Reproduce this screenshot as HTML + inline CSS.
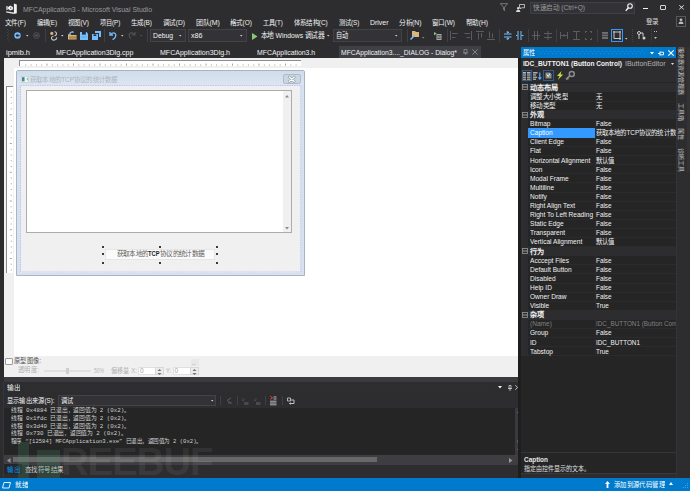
<!DOCTYPE html>
<html lang="zh-CN"><head><meta charset="utf-8"><style>
html,body{margin:0;padding:0;}
body{width:690px;height:491px;overflow:hidden;position:relative;background:#2d2d30;font-family:'Liberation Sans', sans-serif;}
div{position:absolute;box-sizing:border-box;}
svg{position:absolute;overflow:visible;}
.t{transform-origin:0 50%;}
</style></head><body>
<svg style="left:6px;top:3px" width="12" height="12" viewBox="0 0 12 12"><path d="M7.9 0.4 L10.8 1.4 V10.3 L7.9 11.1 Z" fill="#f1f1f1"/><path d="M0.2 8.2 L7.9 9.6 V11.1 L0.2 9.4 Z" fill="#e6e6e6"/><path d="M0.4 2.7 L2.3 4.1 L4.1 2.6 L6.9 3.9 V6.6 L4.1 7.6 L2.3 6.1 L0.4 7.3 Z M4.3 4.3 V5.9 L5.6 5.1 Z M1.4 4.3 V5.7 L2.3 5.0 Z" fill="#f1f1f1" fill-rule="evenodd"/></svg>
<div id="t0" class="t" style="transform:scaleX(0.9219);left:23.2px;top:4.53px;font-size:7.5px;line-height:9.75px;color:#999999;font-weight:normal;font-family:'Liberation Sans', sans-serif;white-space:nowrap;">MFCApplication3 - Microsoft Visual Studio</div>
<svg style="left:500px;top:3px" width="8" height="8" viewBox="0 0 8 8"><path d="M0.4 0.6 H7.6 L4.5 4.2 V7.6 L3.5 6.6 V4.2 Z" fill="none" stroke="#a8a8a8" stroke-width="0.6"/></svg>
<svg style="left:516px;top:4px" width="9" height="8" viewBox="0 0 9 8"><path d="M3.5 0.5 H8.5 V3.8 H5.5 L4.5 4.8 V3.8 H3.5 Z" fill="none" stroke="#d8d8d8" stroke-width="0.8"/><circle cx="2.2" cy="4.3" r="1.2" fill="#d8d8d8"/><path d="M0 8 Q0 5.8 2.2 5.8 Q4.4 5.8 4.4 8 Z" fill="#d8d8d8"/></svg>
<div style="left:530px;top:2px;width:105px;height:12px;background:#333337;border:1px solid #3f3f46;"></div>
<div id="t1" class="t" style="transform:scaleX(0.9449);left:533px;top:2.75px;font-size:7px;line-height:9.10px;color:#999999;font-weight:normal;font-family:'Liberation Sans', sans-serif;white-space:nowrap;">快速启动 (Ctrl+Q)</div>
<svg style="left:625px;top:3px" width="8" height="9" viewBox="0 0 8 9"><circle cx="5" cy="3" r="2.3" fill="none" stroke="#f1f1f1" stroke-width="1.1"/><path d="M3.4 4.7 L0.8 7.8" stroke="#f1f1f1" stroke-width="1.4"/></svg>
<div style="left:642.5px;top:7.6px;width:5px;height:1.6px;background:#f1f1f1;"></div>
<div style="left:660px;top:4.6px;width:5.8px;height:5.5px;border:1px solid #d8d8d8;border-top-width:1.8px;border-radius:1px;"></div>
<svg style="left:678.5px;top:5.2px" width="5" height="4.6" viewBox="0 0 5 4.6"><path d="M0.3 0.3 L4.7 4.3 M4.7 0.3 L0.3 4.3" stroke="#e0e0e0" stroke-width="1"/></svg>
<div id="t2" class="t" style="transform:scaleX(0.9002);left:5px;top:17.75px;font-size:7.3px;line-height:9.49px;color:#f1f1f1;font-weight:normal;font-family:'Liberation Sans', sans-serif;white-space:nowrap;">文件(F)</div>
<div id="t3" class="t" style="transform:scaleX(0.8427);left:37px;top:17.75px;font-size:7.3px;line-height:9.49px;color:#f1f1f1;font-weight:normal;font-family:'Liberation Sans', sans-serif;white-space:nowrap;">编辑(E)</div>
<div id="t4" class="t" style="transform:scaleX(0.8848);left:68px;top:17.75px;font-size:7.3px;line-height:9.49px;color:#f1f1f1;font-weight:normal;font-family:'Liberation Sans', sans-serif;white-space:nowrap;">视图(V)</div>
<div id="t5" class="t" style="transform:scaleX(0.8553);left:99.7px;top:17.75px;font-size:7.3px;line-height:9.49px;color:#f1f1f1;font-weight:normal;font-family:'Liberation Sans', sans-serif;white-space:nowrap;">项目(P)</div>
<div id="t6" class="t" style="transform:scaleX(0.8848);left:131px;top:17.75px;font-size:7.3px;line-height:9.49px;color:#f1f1f1;font-weight:normal;font-family:'Liberation Sans', sans-serif;white-space:nowrap;">生成(B)</div>
<div id="t7" class="t" style="transform:scaleX(0.9113);left:163px;top:17.75px;font-size:7.3px;line-height:9.49px;color:#f1f1f1;font-weight:normal;font-family:'Liberation Sans', sans-serif;white-space:nowrap;">调试(D)</div>
<div id="t8" class="t" style="transform:scaleX(0.9578);left:195.6px;top:17.75px;font-size:7.3px;line-height:9.49px;color:#f1f1f1;font-weight:normal;font-family:'Liberation Sans', sans-serif;white-space:nowrap;">团队(M)</div>
<div id="t9" class="t" style="transform:scaleX(0.8962);left:229.5px;top:17.75px;font-size:7.3px;line-height:9.49px;color:#f1f1f1;font-weight:normal;font-family:'Liberation Sans', sans-serif;white-space:nowrap;">格式(O)</div>
<div id="t10" class="t" style="transform:scaleX(0.8445);left:262.8px;top:17.75px;font-size:7.3px;line-height:9.49px;color:#f1f1f1;font-weight:normal;font-family:'Liberation Sans', sans-serif;white-space:nowrap;">工具(T)</div>
<div id="t11" class="t" style="transform:scaleX(0.8836);left:294px;top:17.75px;font-size:7.3px;line-height:9.49px;color:#f1f1f1;font-weight:normal;font-family:'Liberation Sans', sans-serif;white-space:nowrap;">体系结构(C)</div>
<div id="t12" class="t" style="transform:scaleX(0.8595);left:338.6px;top:17.75px;font-size:7.3px;line-height:9.49px;color:#f1f1f1;font-weight:normal;font-family:'Liberation Sans', sans-serif;white-space:nowrap;">测试(S)</div>
<div id="t13" class="t" style="transform:scaleX(0.9502);left:369.5px;top:17.75px;font-size:7.3px;line-height:9.49px;color:#f1f1f1;font-weight:normal;font-family:'Liberation Sans', sans-serif;white-space:nowrap;">Driver</div>
<div id="t14" class="t" style="transform:scaleX(0.9320);left:398.5px;top:17.75px;font-size:7.3px;line-height:9.49px;color:#f1f1f1;font-weight:normal;font-family:'Liberation Sans', sans-serif;white-space:nowrap;">分析(N)</div>
<div id="t15" class="t" style="transform:scaleX(0.8932);left:432px;top:17.75px;font-size:7.3px;line-height:9.49px;color:#f1f1f1;font-weight:normal;font-family:'Liberation Sans', sans-serif;white-space:nowrap;">窗口(W)</div>
<div id="t16" class="t" style="transform:scaleX(0.9113);left:466px;top:17.75px;font-size:7.3px;line-height:9.49px;color:#f1f1f1;font-weight:normal;font-family:'Liberation Sans', sans-serif;white-space:nowrap;">帮助(H)</div>
<div id="t17" class="t" style="transform:scaleX(0.9000);left:645.9px;top:16.75px;font-size:7.3px;line-height:9.49px;color:#d8d8d8;font-weight:normal;font-family:'Liberation Sans', sans-serif;white-space:nowrap;">登录</div>
<div style="left:675.8px;top:15.7px;width:10.6px;height:10.9px;border:1px solid #5a5a5e;"></div>
<svg style="left:678px;top:18px" width="6" height="6" viewBox="0 0 6 6"><circle cx="3" cy="1.8" r="1.4" fill="#bbb"/><path d="M0.5 6 Q0.5 3.6 3 3.6 Q5.5 3.6 5.5 6 Z" fill="#bbb"/></svg>
<svg style="left:7px;top:29px" width="3" height="12"><g fill="#46464a"><rect x="0" y="0.0" width="1" height="1"/><rect x="1" y="1.5" width="1" height="1"/><rect x="0" y="3.0" width="1" height="1"/><rect x="1" y="4.5" width="1" height="1"/><rect x="0" y="6.0" width="1" height="1"/><rect x="1" y="7.5" width="1" height="1"/><rect x="0" y="9.0" width="1" height="1"/><rect x="1" y="10.5" width="1" height="1"/></g></svg>
<svg style="left:14px;top:32px" width="7" height="7" viewBox="0 0 7 7"><circle cx="3.5" cy="3.5" r="3.2" fill="#75beff"/><path d="M1.5 3.5 L3.5 1.6 V2.8 H5.5 V4.2 H3.5 V5.4 Z" fill="#2d2d30"/></svg>
<svg style="left:25.75px;top:34.7px" width="2.5" height="1.6"><path d="M0 0 H2.5 L1.25 1.6 Z" fill="#d0d0d0"/></svg>
<svg style="left:33px;top:32px" width="7" height="7" viewBox="0 0 7 7"><circle cx="3.5" cy="3.5" r="2.9" fill="none" stroke="#555558" stroke-width="0.9"/><path d="M5.5 3.5 L3.5 1.6 V2.8 H1.5 V4.2 H3.5 V5.4 Z" fill="#555558"/></svg>
<div style="left:45px;top:29px;width:1px;height:13px;background:#3f3f46;"></div>
<svg style="left:49.5px;top:31px" width="8" height="10" viewBox="0 0 8 10"><circle cx="1.8" cy="2.4" r="1.6" fill="#e0b070"/><path d="M4.5 0.8 Q6.8 1 6.5 3.2 Q6.2 4.6 4.5 4.8 M3.5 5.2 Q1 5.6 1.6 7.8 Q2.4 9.4 4.6 9 Q6.8 8.6 6.6 6.4" fill="none" stroke="#c8c8c8" stroke-width="1.1"/></svg>
<svg style="left:61.35px;top:34.7px" width="2.5" height="1.6"><path d="M0 0 H2.5 L1.25 1.6 Z" fill="#d0d0d0"/></svg>
<svg style="left:67.8px;top:31px" width="9" height="9" viewBox="0 0 9 9"><path d="M0 3.2 H2.6 L3.4 4 H8.5 V8.6 H0 Z" fill="#dcb67a"/><path d="M1 5.2 H8 V7.8 H1 Z" fill="#b08a4a"/><path d="M1.6 3.6 Q2 0.8 5 0.9" fill="none" stroke="#75beff" stroke-width="1.1"/><path d="M4.4 0 L6.2 1 L4.6 2.2 Z" fill="#75beff"/></svg>
<svg style="left:80px;top:31.5px" width="8" height="8" viewBox="0 0 8 8"><path d="M0 0 H6.5 L8 1.5 V8 H0 Z" fill="#75beff"/><rect x="2" y="0" width="3.8" height="2.6" fill="#2d2d30"/><rect x="1.5" y="4.6" width="5" height="0.8" fill="#5a9ed8"/></svg>
<svg style="left:91.8px;top:31px" width="9" height="9" viewBox="0 0 9 9"><path d="M3 0 H9 V6 H7 V2 H3 Z" fill="#75beff"/><path d="M0 3 H6 V9 H0 Z" fill="#75beff"/><rect x="1.5" y="3.4" width="2.8" height="1.6" fill="#2d2d30"/></svg>
<div style="left:104px;top:29px;width:1px;height:13px;background:#3f3f46;"></div>
<svg style="left:108.7px;top:31px" width="8" height="9" viewBox="0 0 8 9"><path d="M1 1 V4 H4" fill="none" stroke="#75beff" stroke-width="1.3"/><path d="M1.5 3.6 Q4 0.8 6.2 2.6 Q7.8 4.6 5.2 7.6 L3.6 8.6" fill="none" stroke="#75beff" stroke-width="1.3"/></svg>
<svg style="left:120.75px;top:34.7px" width="2.5" height="1.6"><path d="M0 0 H2.5 L1.25 1.6 Z" fill="#d0d0d0"/></svg>
<svg style="left:128px;top:31px" width="8" height="9" viewBox="0 0 8 9"><path d="M7 1 V4 H4" fill="none" stroke="#555558" stroke-width="1.1"/><path d="M6.5 3.6 Q4 0.8 1.8 2.6 Q0.2 4.6 2.8 7.6" fill="none" stroke="#555558" stroke-width="1.1"/></svg>
<svg style="left:139.75px;top:34.7px" width="2.5" height="1.6"><path d="M0 0 H2.5 L1.25 1.6 Z" fill="#555558"/></svg>
<div style="left:147px;top:29px;width:1px;height:13px;background:#3f3f46;"></div>
<div style="left:150px;top:29px;width:35.5px;height:13px;background:#333337;border:1px solid #434346;"></div>
<div id="t18" class="t" style="transform:scaleX(0.9046);left:153px;top:30.62px;font-size:7.5px;line-height:9.75px;color:#f1f1f1;font-weight:normal;font-family:'Liberation Sans', sans-serif;white-space:nowrap;">Debug</div>
<svg style="left:178.75px;top:34.7px" width="2.5" height="1.6"><path d="M0 0 H2.5 L1.25 1.6 Z" fill="#d0d0d0"/></svg>
<div style="left:188px;top:29px;width:58.5px;height:13px;background:#333337;border:1px solid #434346;"></div>
<div id="t19" class="t" style="transform:scaleX(0.9509);left:190.5px;top:30.62px;font-size:7.5px;line-height:9.75px;color:#f1f1f1;font-weight:normal;font-family:'Liberation Sans', sans-serif;white-space:nowrap;">x86</div>
<svg style="left:239.75px;top:34.7px" width="2.5" height="1.6"><path d="M0 0 H2.5 L1.25 1.6 Z" fill="#d0d0d0"/></svg>
<svg style="left:251.5px;top:32.5px" width="6" height="7" viewBox="0 0 6 7"><path d="M0 0 L5.5 3.5 L0 7 Z" fill="#8ac674"/></svg>
<div id="t20" class="t" style="transform:scaleX(0.9053);left:261px;top:30.62px;font-size:7.5px;line-height:9.75px;color:#f1f1f1;font-weight:normal;font-family:'Liberation Sans', sans-serif;white-space:nowrap;">本地 Windows 调试器</div>
<svg style="left:327.45px;top:34.7px" width="2.5" height="1.6"><path d="M0 0 H2.5 L1.25 1.6 Z" fill="#d0d0d0"/></svg>
<div style="left:333px;top:29px;width:69px;height:13px;background:#333337;border:1px solid #434346;"></div>
<div id="t21" class="t" style="transform:scaleX(0.8214);left:336px;top:30.62px;font-size:7.5px;line-height:9.75px;color:#f1f1f1;font-weight:normal;font-family:'Liberation Sans', sans-serif;white-space:nowrap;">自动</div>
<svg style="left:395.25px;top:34.7px" width="2.5" height="1.6"><path d="M0 0 H2.5 L1.25 1.6 Z" fill="#d0d0d0"/></svg>
<div style="left:406.5px;top:29px;width:1px;height:13px;background:#3f3f46;"></div>
<svg style="left:410px;top:31px" width="9" height="9" viewBox="0 0 9 9"><path d="M2 0 H5 L6 1 H9 V6 H2 Z" fill="#dcb67a"/><path d="M0.5 8.5 L4.5 4.5" stroke="#75beff" stroke-width="1.6"/></svg>
<svg style="left:421.95px;top:37.400000000000006px" width="2.5" height="1.6"><path d="M0 0 H2.5 L1.25 1.6 Z" fill="#8a8a8a"/></svg>
<svg style="left:434px;top:31.5px" width="8" height="9" viewBox="0 0 8 9"><path d="M0 0 L2.8 1.6 L0 3.2 Z" fill="#8ac674"/><rect x="2.5" y="2" width="5" height="6" fill="#a8a8a8"/><path d="M3.3 3.5 H6.7 M3.3 5 H6.7 M3.3 6.5 H6.7" stroke="#2d2d30" stroke-width="0.6"/></svg>
<div style="left:446.6px;top:29px;width:1px;height:13px;background:#3f3f46;"></div>
<svg style="left:450.4px;top:31px" width="8" height="9" viewBox="0 0 8 9"><path d="M0.5 0 V9 M2 2.5 H7.5 M2 6.5 H5.5" fill="none" stroke="#5c5c60" stroke-width="1"/></svg>
<svg style="left:463.5px;top:31px" width="8" height="9" viewBox="0 0 8 9"><path d="M7.5 0 V9 M0.5 2.5 H6 M2.5 6.5 H6" fill="none" stroke="#5c5c60" stroke-width="1"/></svg>
<svg style="left:475.6px;top:31px" width="8" height="9" viewBox="0 0 8 9"><path d="M0 0.5 H8 M2.5 2 V8.5 M5.5 2 V6.5" fill="none" stroke="#5c5c60" stroke-width="1"/></svg>
<svg style="left:487px;top:31px" width="8" height="9" viewBox="0 0 8 9"><path d="M0 8.5 H8 M2.5 0.5 V7 M5.5 2.5 V7" fill="none" stroke="#5c5c60" stroke-width="1"/></svg>
<div style="left:499px;top:29px;width:1px;height:13px;background:#3f3f46;"></div>
<svg style="left:503.5px;top:31px" width="8" height="9" viewBox="0 0 8 9"><path d="M0 3 H7.5 M0 6 H7.5 M3.8 0 V2 M3.8 7 V9 M2.5 1 L3.8 2.2 L5 1 M2.5 8 L3.8 6.8 L5 8" fill="none" stroke="#75beff" stroke-width="1"/></svg>
<svg style="left:516px;top:31px" width="8" height="9" viewBox="0 0 8 9"><path d="M2 0 V9 M5 0 V9 M0 4.5 H1.5 M5.5 4.5 H7.5" fill="none" stroke="#75beff" stroke-width="1"/></svg>
<div style="left:528px;top:29px;width:1px;height:13px;background:#3f3f46;"></div>
<svg style="left:532px;top:31px" width="8" height="9" viewBox="0 0 8 9"><path d="M2.5 0 V9 M5.5 0 V9 M0 4.5 H8" fill="none" stroke="#5c5c60" stroke-width="1"/></svg>
<svg style="left:544px;top:31px" width="8" height="9" viewBox="0 0 8 9"><path d="M0 2.5 H8 M0 6.5 H8 M4 0 V9" fill="none" stroke="#5c5c60" stroke-width="1"/></svg>
<div style="left:555.6px;top:29px;width:1px;height:13px;background:#3f3f46;"></div>
<svg style="left:559.5px;top:31px" width="8" height="9" viewBox="0 0 8 9"><path d="M0.5 1 V8 M7.5 1 V8 M1 4.5 H7 M4 3 V6" fill="none" stroke="#5c5c60" stroke-width="1"/></svg>
<svg style="left:573px;top:31px" width="7" height="9" viewBox="0 0 7 9"><path d="M0 0.5 H7 M0 8.5 H7 M3.5 0.5 V8.5" fill="none" stroke="#5c5c60" stroke-width="1"/></svg>
<svg style="left:585px;top:31px" width="7" height="9" viewBox="0 0 7 9"><path d="M0 0.5 H2 M5 0.5 H7 M0 8.5 H2 M5 8.5 H7 M0.5 0 V2 M0.5 7 V9 M6.5 0 V2 M6.5 7 V9" fill="none" stroke="#5c5c60" stroke-width="1"/></svg>
<div style="left:597px;top:29px;width:1px;height:13px;background:#3f3f46;"></div>
<svg style="left:601.5px;top:32px" width="6" height="7" viewBox="0 0 6 7"><rect x="0" y="0" width="6" height="7" fill="#707074"/><path d="M0 2.3 H6 M0 4.6 H6" stroke="#2d2d30" stroke-width="0.7"/></svg>
<div style="left:610.5px;top:28.5px;width:12px;height:13.5px;border:1px solid #3399ff;"></div>
<svg style="left:612.5px;top:31px" width="8" height="9" viewBox="0 0 8 9"><path d="M1 0 V7.5 H8" fill="none" stroke="#c8c8c8" stroke-width="1"/></svg>
<svg style="left:612.5px;top:31px" width="8" height="9"><path d="M0 1 H8 M7 0 V9" fill="none" stroke="#c8c8c8" stroke-width="1"/></svg>
<svg style="left:624.75px;top:38.2px" width="2.5" height="1.6"><path d="M0 0 H2.5 L1.25 1.6 Z" fill="#d0d0d0"/></svg>
<svg style="left:631.5px;top:29px" width="1" height="13"><g fill="#46464a"><rect x="0" y="0" width="1" height="1"/><rect x="0" y="2" width="1" height="1"/><rect x="0" y="4" width="1" height="1"/><rect x="0" y="6" width="1" height="1"/><rect x="0" y="8" width="1" height="1"/><rect x="0" y="10" width="1" height="1"/><rect x="0" y="12" width="1" height="1"/></g></svg>
<svg style="left:637px;top:31px" width="9" height="9" viewBox="0 0 9 9"><circle cx="2" cy="2" r="1.5" fill="none" stroke="#d0d0d0" stroke-width="1"/><circle cx="7" cy="7" r="1.5" fill="#d0d0d0"/><path d="M3.5 2 H6 V5.5 M2 3.5 V8" fill="none" stroke="#d0d0d0" stroke-width="1"/></svg>
<svg style="left:650.5px;top:29px" width="1" height="13"><g fill="#46464a"><rect x="0" y="0" width="1" height="1"/><rect x="0" y="2" width="1" height="1"/><rect x="0" y="4" width="1" height="1"/><rect x="0" y="6" width="1" height="1"/><rect x="0" y="8" width="1" height="1"/><rect x="0" y="10" width="1" height="1"/><rect x="0" y="12" width="1" height="1"/></g></svg>
<svg style="left:654px;top:31px" width="3" height="10"><rect x="0" y="0" width="1" height="1" fill="#bbb"/><rect x="2" y="0" width="1" height="1" fill="#bbb"/><path d="M0 6 H3 L1.5 8 Z" fill="#bbb"/></svg>
<div id="t22" class="t" style="transform:scaleX(0.9922);left:5.5px;top:47.83px;font-size:7.5px;line-height:9.75px;color:#f1f1f1;font-weight:normal;font-family:'Liberation Sans', sans-serif;white-space:nowrap;">ipmib.h</div>
<div id="t23" class="t" style="transform:scaleX(0.9376);left:56px;top:47.83px;font-size:7.5px;line-height:9.75px;color:#f1f1f1;font-weight:normal;font-family:'Liberation Sans', sans-serif;white-space:nowrap;">MFCApplication3Dlg.cpp</div>
<div id="t24" class="t" style="transform:scaleX(0.9380);left:159.6px;top:47.83px;font-size:7.5px;line-height:9.75px;color:#f1f1f1;font-weight:normal;font-family:'Liberation Sans', sans-serif;white-space:nowrap;">MFCApplication3Dlg.h</div>
<div id="t25" class="t" style="transform:scaleX(0.9183);left:256.7px;top:47.83px;font-size:7.5px;line-height:9.75px;color:#f1f1f1;font-weight:normal;font-family:'Liberation Sans', sans-serif;white-space:nowrap;">MFCApplication3.h</div>
<div style="left:339px;top:46px;width:142px;height:12px;background:#3f3f46;"></div>
<div id="t26" class="t" style="transform:scaleX(0.9005);left:341px;top:47.83px;font-size:7.5px;line-height:9.75px;color:#f1f1f1;font-weight:normal;font-family:'Liberation Sans', sans-serif;white-space:nowrap;">MFCApplication3...._DIALOG - Dialog*</div>
<svg style="left:463px;top:49px" width="5" height="6"><path d="M1 0.5 H4 V4 H1 Z M0 4 H5 M2.5 4 V6" fill="none" stroke="#8a8a8e" stroke-width="0.8"/></svg>
<svg style="left:471.5px;top:49px" width="6" height="6"><path d="M0.3 0.3 L5.7 5.7 M5.7 0.3 L0.3 5.7" stroke="#8a8a8e" stroke-width="0.9"/></svg>
<div style="left:4px;top:58px;width:514.4px;height:319px;background:#ffffff;"></div>
<div style="left:4px;top:58px;width:514.4px;height:9.6px;background:#f0f0f0;"></div>
<div style="left:4px;top:58px;width:9.8px;height:298px;background:#f0f0f0;"></div>
<div style="left:19px;top:60px;width:282px;height:6px;background:#ffffff;border-top:1px solid #8c8c8c;border-left:1px solid #8c8c8c;"></div>
<svg style="left:19.5px;top:61px" width="282" height="6"><rect x="5.30" y="3.5" width="1" height="1.1" fill="#a4a4a4"/><rect x="10.60" y="3.5" width="1" height="1.1" fill="#a4a4a4"/><rect x="15.90" y="3.5" width="1" height="1.1" fill="#a4a4a4"/><rect x="21.20" y="3.5" width="1" height="1.1" fill="#a4a4a4"/><rect x="26.50" y="2.6" width="1" height="2" fill="#a4a4a4"/><rect x="31.80" y="3.5" width="1" height="1.1" fill="#a4a4a4"/><rect x="37.10" y="3.5" width="1" height="1.1" fill="#a4a4a4"/><rect x="42.40" y="3.5" width="1" height="1.1" fill="#a4a4a4"/><rect x="47.70" y="3.5" width="1" height="1.1" fill="#a4a4a4"/><rect x="53.00" y="2.6" width="1" height="2" fill="#a4a4a4"/><rect x="58.30" y="3.5" width="1" height="1.1" fill="#a4a4a4"/><rect x="63.60" y="3.5" width="1" height="1.1" fill="#a4a4a4"/><rect x="68.90" y="3.5" width="1" height="1.1" fill="#a4a4a4"/><rect x="74.20" y="3.5" width="1" height="1.1" fill="#a4a4a4"/><rect x="79.50" y="2.6" width="1" height="2" fill="#a4a4a4"/><rect x="84.80" y="3.5" width="1" height="1.1" fill="#a4a4a4"/><rect x="90.10" y="3.5" width="1" height="1.1" fill="#a4a4a4"/><rect x="95.40" y="3.5" width="1" height="1.1" fill="#a4a4a4"/><rect x="100.70" y="3.5" width="1" height="1.1" fill="#a4a4a4"/><rect x="106.00" y="2.6" width="1" height="2" fill="#a4a4a4"/><rect x="111.30" y="3.5" width="1" height="1.1" fill="#a4a4a4"/><rect x="116.60" y="3.5" width="1" height="1.1" fill="#a4a4a4"/><rect x="121.90" y="3.5" width="1" height="1.1" fill="#a4a4a4"/><rect x="127.20" y="3.5" width="1" height="1.1" fill="#a4a4a4"/><rect x="132.50" y="2.6" width="1" height="2" fill="#a4a4a4"/><rect x="137.80" y="3.5" width="1" height="1.1" fill="#a4a4a4"/><rect x="143.10" y="3.5" width="1" height="1.1" fill="#a4a4a4"/><rect x="148.40" y="3.5" width="1" height="1.1" fill="#a4a4a4"/><rect x="153.70" y="3.5" width="1" height="1.1" fill="#a4a4a4"/><rect x="159.00" y="2.6" width="1" height="2" fill="#a4a4a4"/><rect x="164.30" y="3.5" width="1" height="1.1" fill="#a4a4a4"/><rect x="169.60" y="3.5" width="1" height="1.1" fill="#a4a4a4"/><rect x="174.90" y="3.5" width="1" height="1.1" fill="#a4a4a4"/><rect x="180.20" y="3.5" width="1" height="1.1" fill="#a4a4a4"/><rect x="185.50" y="2.6" width="1" height="2" fill="#a4a4a4"/><rect x="190.80" y="3.5" width="1" height="1.1" fill="#a4a4a4"/><rect x="196.10" y="3.5" width="1" height="1.1" fill="#a4a4a4"/><rect x="201.40" y="3.5" width="1" height="1.1" fill="#a4a4a4"/><rect x="206.70" y="3.5" width="1" height="1.1" fill="#a4a4a4"/><rect x="212.00" y="2.6" width="1" height="2" fill="#a4a4a4"/><rect x="217.30" y="3.5" width="1" height="1.1" fill="#a4a4a4"/><rect x="222.60" y="3.5" width="1" height="1.1" fill="#a4a4a4"/><rect x="227.90" y="3.5" width="1" height="1.1" fill="#a4a4a4"/><rect x="233.20" y="3.5" width="1" height="1.1" fill="#a4a4a4"/><rect x="238.50" y="2.6" width="1" height="2" fill="#a4a4a4"/><rect x="243.80" y="3.5" width="1" height="1.1" fill="#a4a4a4"/><rect x="249.10" y="3.5" width="1" height="1.1" fill="#a4a4a4"/><rect x="254.40" y="3.5" width="1" height="1.1" fill="#a4a4a4"/><rect x="259.70" y="3.5" width="1" height="1.1" fill="#a4a4a4"/><rect x="265.00" y="2.6" width="1" height="2" fill="#a4a4a4"/><rect x="270.30" y="3.5" width="1" height="1.1" fill="#a4a4a4"/><rect x="275.60" y="3.5" width="1" height="1.1" fill="#a4a4a4"/></svg>
<div style="left:6px;top:85.7px;width:6.5px;height:187px;background:#ffffff;border-top:1px solid #8c8c8c;border-left:1px solid #8c8c8c;"></div>
<svg style="left:6.5px;top:85.7px" width="7" height="187"><rect x="3.7" y="5.25" width="1.1" height="1" fill="#a4a4a4"/><rect x="3.7" y="11.00" width="1.1" height="1" fill="#a4a4a4"/><rect x="3.7" y="16.75" width="1.1" height="1" fill="#a4a4a4"/><rect x="3.7" y="22.50" width="1.1" height="1" fill="#a4a4a4"/><rect x="2.8" y="28.25" width="2" height="1" fill="#a4a4a4"/><rect x="3.7" y="34.00" width="1.1" height="1" fill="#a4a4a4"/><rect x="3.7" y="39.75" width="1.1" height="1" fill="#a4a4a4"/><rect x="3.7" y="45.50" width="1.1" height="1" fill="#a4a4a4"/><rect x="3.7" y="51.25" width="1.1" height="1" fill="#a4a4a4"/><rect x="2.8" y="57.00" width="2" height="1" fill="#a4a4a4"/><rect x="3.7" y="62.75" width="1.1" height="1" fill="#a4a4a4"/><rect x="3.7" y="68.50" width="1.1" height="1" fill="#a4a4a4"/><rect x="3.7" y="74.25" width="1.1" height="1" fill="#a4a4a4"/><rect x="3.7" y="80.00" width="1.1" height="1" fill="#a4a4a4"/><rect x="2.8" y="85.75" width="2" height="1" fill="#a4a4a4"/><rect x="3.7" y="91.50" width="1.1" height="1" fill="#a4a4a4"/><rect x="3.7" y="97.25" width="1.1" height="1" fill="#a4a4a4"/><rect x="3.7" y="103.00" width="1.1" height="1" fill="#a4a4a4"/><rect x="3.7" y="108.75" width="1.1" height="1" fill="#a4a4a4"/><rect x="2.8" y="114.50" width="2" height="1" fill="#a4a4a4"/><rect x="3.7" y="120.25" width="1.1" height="1" fill="#a4a4a4"/><rect x="3.7" y="126.00" width="1.1" height="1" fill="#a4a4a4"/><rect x="3.7" y="131.75" width="1.1" height="1" fill="#a4a4a4"/><rect x="3.7" y="137.50" width="1.1" height="1" fill="#a4a4a4"/><rect x="2.8" y="143.25" width="2" height="1" fill="#a4a4a4"/><rect x="3.7" y="149.00" width="1.1" height="1" fill="#a4a4a4"/><rect x="3.7" y="154.75" width="1.1" height="1" fill="#a4a4a4"/><rect x="3.7" y="160.50" width="1.1" height="1" fill="#a4a4a4"/><rect x="3.7" y="166.25" width="1.1" height="1" fill="#a4a4a4"/><rect x="2.8" y="172.00" width="2" height="1" fill="#a4a4a4"/><rect x="3.7" y="177.75" width="1.1" height="1" fill="#a4a4a4"/><rect x="3.7" y="183.50" width="1.1" height="1" fill="#a4a4a4"/></svg>
<div style="left:4px;top:356px;width:514.4px;height:21px;background:#f0f0f0;"></div>
<div style="left:15.6px;top:70px;width:289px;height:206px;background:#d6e2ee;border:1px solid #a8b4c0;border-radius:2px 2px 0 0;"></div>
<div style="left:16.6px;top:71px;width:287px;height:14px;background:linear-gradient(#cfdcea,#dbe6f1);"></div>
<svg style="left:20.5px;top:76px" width="8" height="6.5"><defs><linearGradient id="ig" x1="0" y1="0" x2="0" y2="1"><stop offset="0" stop-color="#3c78b8"/><stop offset="1" stop-color="#3aa060"/></linearGradient></defs><rect x="0.25" y="0.25" width="7.5" height="6" fill="#f6f6f6" stroke="#b8bcc8" stroke-width="0.5"/><rect x="1" y="1.2" width="2.6" height="4.2" fill="url(#ig)"/><rect x="5.8" y="1.8" width="1" height="2.5" fill="#6ab890"/></svg>
<div id="t27" class="t" style="transform:scaleX(0.8915);left:30px;top:74.82px;font-size:7.2px;line-height:9.36px;color:#aeb5bd;font-weight:normal;font-family:'Liberation Sans', sans-serif;white-space:nowrap;">获取本地的TCP协议的统计数据</div>
<div style="left:283px;top:74.4px;width:17.6px;height:10px;background:#c9d6e4;border:1px solid #b0bccb;border-radius:2px;"></div>
<svg style="left:288px;top:76px" width="7.5" height="6.5"><path d="M1.2 1 L6.3 5.5 M6.3 1 L1.2 5.5" stroke="#8d99a6" stroke-width="2.6" stroke-linecap="round"/><path d="M1.2 1 L6.3 5.5 M6.3 1 L1.2 5.5" stroke="#ffffff" stroke-width="1.3" stroke-linecap="round"/></svg>
<div style="left:19.5px;top:85.3px;width:281.3px;height:187.5px;background:#f0f0f0;"></div>
<svg style="left:19.5px;top:85.3px" width="282" height="188"><rect x="0.5" y="0.5" width="280.3" height="186.5" fill="none" stroke="#c0c0f8" stroke-width="1" stroke-dasharray="1.6 0.8"/></svg>
<div style="left:26px;top:90px;width:266px;height:143px;background:#ffffff;border:1px solid #acacac;"></div>
<div style="left:282.5px;top:91px;width:8.5px;height:141px;background:#f0f0f0;"></div>
<svg style="left:284.5px;top:94.5px" width="4" height="3"><path d="M0 2.5 L2 0 L4 2.5 Z" fill="#8a8a8a"/></svg>
<svg style="left:284.5px;top:226.5px" width="4" height="3"><path d="M0 0 L4 0 L2 2.5 Z" fill="#8a8a8a"/></svg>
<div style="left:104.8px;top:248.6px;width:110.7px;height:11.4px;background:#fafafa;border:1px solid #e6e6e6;"></div>
<div style="left:101.9px;top:245.7px;width:2px;height:2px;background:#383838;"></div>
<div style="left:101.9px;top:253.4px;width:2px;height:2px;background:#383838;"></div>
<div style="left:101.9px;top:261.7px;width:2px;height:2px;background:#383838;"></div>
<div style="left:159px;top:245.7px;width:2px;height:2px;background:#383838;"></div>
<div style="left:159px;top:261.7px;width:2px;height:2px;background:#383838;"></div>
<div style="left:216.4px;top:245.7px;width:2px;height:2px;background:#383838;"></div>
<div style="left:216.4px;top:253.4px;width:2px;height:2px;background:#383838;"></div>
<div style="left:216.4px;top:261.7px;width:2px;height:2px;background:#383838;"></div>
<div id="t28" class="t" style="transform:scaleX(1.0333);left:117px;top:250.34px;font-size:6.4px;line-height:8.32px;color:#606060;font-weight:normal;font-family:'Liberation Serif', serif;white-space:nowrap;">获取本地的</div>
<div id="t29" class="t" style="transform:scaleX(0.8987);left:148px;top:250.34px;font-size:6.4px;line-height:8.32px;color:#202020;font-weight:bold;font-family:'Liberation Sans', sans-serif;white-space:nowrap;">TCP</div>
<div id="t30" class="t" style="transform:scaleX(1.0595);left:159.5px;top:250.34px;font-size:6.4px;line-height:8.32px;color:#606060;font-weight:normal;font-family:'Liberation Serif', serif;white-space:nowrap;">协议的统计数据</div>
<div style="left:5.4px;top:358.3px;width:7.2px;height:7.2px;background:#fbfbfb;border:1px solid #9a9a9a;border-radius:1px;"></div>
<div id="t31" class="t" style="transform:scaleX(0.9033);left:14.3px;top:357.28px;font-size:6.8px;line-height:8.84px;color:#505050;font-weight:normal;font-family:'Liberation Sans', sans-serif;white-space:nowrap;">原型图像:</div>
<div id="t32" class="t" style="transform:scaleX(0.9174);left:17.8px;top:366.28px;font-size:6.8px;line-height:8.84px;color:#b0b0b0;font-weight:normal;font-family:'Liberation Sans', sans-serif;white-space:nowrap;">透明度:</div>
<div style="left:43.5px;top:369.8px;width:47.7px;height:2px;background:#e0e0e0;border-radius:1px;"></div>
<div style="left:66.2px;top:367.7px;width:2.7px;height:6.1px;background:#cfcfcf;"></div>
<div id="t33" class="t" style="transform:scaleX(0.7931);left:94px;top:366.90px;font-size:6.3px;line-height:8.19px;color:#b8b8b8;font-weight:normal;font-family:'Liberation Sans', sans-serif;white-space:nowrap;">50%</div>
<div id="t34" class="t" style="transform:scaleX(0.8870);left:111px;top:366.58px;font-size:6.8px;line-height:8.84px;color:#b0b0b0;font-weight:normal;font-family:'Liberation Sans', sans-serif;white-space:nowrap;">偏移量 X:</div>
<div style="left:138.4px;top:367px;width:25.6px;height:8.4px;background:#ffffff;border:1px solid #e0e0e0;"></div>
<div id="t35" class="t" style="left:140px;top:366.97px;font-size:6.5px;line-height:8.45px;color:#a0a0a0;font-weight:normal;font-family:'Liberation Sans', sans-serif;white-space:nowrap;">0</div>
<div style="left:155px;top:367px;width:8.5px;height:8.4px;background:#ececec;border:1px solid #d8d8d8;"></div>
<div id="t36" class="t" style="transform:scaleX(0.8269);left:166px;top:366.58px;font-size:6.8px;line-height:8.84px;color:#b0b0b0;font-weight:normal;font-family:'Liberation Sans', sans-serif;white-space:nowrap;">Y:</div>
<div style="left:173px;top:367px;width:25.7px;height:8.4px;background:#ffffff;border:1px solid #e0e0e0;"></div>
<div id="t37" class="t" style="left:174.6px;top:366.97px;font-size:6.5px;line-height:8.45px;color:#a0a0a0;font-weight:normal;font-family:'Liberation Sans', sans-serif;white-space:nowrap;">0</div>
<div style="left:190px;top:367px;width:8.5px;height:8.4px;background:#ececec;border:1px solid #d8d8d8;"></div>
<svg style="left:157px;top:368.5px" width="5" height="6"><path d="M0.5 2 L2.5 0 L4.5 2 Z M0.5 4 L4.5 4 L2.5 6 Z" fill="#707070"/></svg>
<svg style="left:192px;top:368.5px" width="5" height="6"><path d="M0.5 2 L2.5 0 L4.5 2 Z M0.5 4 L4.5 4 L2.5 6 Z" fill="#707070"/></svg>
<div style="left:191px;top:359px;width:7.7px;height:7px;background:#e8e8e8;"></div>
<div id="t38" class="t" style="left:192px;top:359.60px;font-size:6px;line-height:7.80px;color:#707070;font-weight:normal;font-family:'Liberation Sans', sans-serif;white-space:nowrap;">..</div>
<div style="left:4px;top:377px;width:515px;height:5px;background:#3a3a3f;"></div>
<div style="left:0px;top:382px;width:519px;height:95px;background:#2d2d30;"></div>
<div id="t39" class="t" style="transform:scaleX(0.9286);left:6.5px;top:383.25px;font-size:7.3px;line-height:9.49px;color:#f1f1f1;font-weight:normal;font-family:'Liberation Sans', sans-serif;white-space:nowrap;">输出</div>
<svg style="left:22px;top:386px;opacity:0.4" width="468" height="4"><defs><pattern id="gp" width="4" height="4" patternUnits="userSpaceOnUse"><rect x="0" y="0" width="1" height="1" fill="#38383c"/><rect x="2" y="2" width="1" height="1" fill="#38383c"/></pattern></defs><rect width="468" height="4" fill="url(#gp)"/></svg>
<svg style="left:498px;top:386.2px" width="4" height="3"><path d="M0 0 H4 L2 2.6 Z" fill="#f1f1f1"/></svg>
<svg style="left:507.5px;top:384.5px" width="4" height="6"><path d="M1 0.5 H3 V3.5 H1 Z M0 3.5 H4 M2 3.5 V6" fill="none" stroke="#d0d0d0" stroke-width="0.8"/></svg>
<svg style="left:515px;top:385px" width="3" height="5"><path d="M0.3 0.3 L2.6 2.5 L0.3 4.7" fill="none" stroke="#d0d0d0" stroke-width="0.9"/></svg>
<div id="t40" class="t" style="transform:scaleX(0.8915);left:7px;top:395.95px;font-size:7px;line-height:9.10px;color:#f1f1f1;font-weight:normal;font-family:'Liberation Sans', sans-serif;white-space:nowrap;">显示输出来源(S):</div>
<div style="left:58.2px;top:395.3px;width:157.7px;height:10.7px;background:#333337;border:1px solid #434346;"></div>
<div style="left:3.3px;top:382px;width:0.8px;height:95px;background:#37373b;"></div>
<div id="t41" class="t" style="transform:scaleX(0.8929);left:60.5px;top:396.15px;font-size:7px;line-height:9.10px;color:#f1f1f1;font-weight:normal;font-family:'Liberation Sans', sans-serif;white-space:nowrap;">调试</div>
<svg style="left:210.75px;top:400.2px" width="2.5" height="1.6"><path d="M0 0 H2.5 L1.25 1.6 Z" fill="#d0d0d0"/></svg>
<div style="left:220px;top:396px;width:1px;height:9px;background:#3f3f46;"></div>
<div style="left:237px;top:396px;width:1px;height:9px;background:#3f3f46;"></div>
<div style="left:265px;top:396px;width:1px;height:9px;background:#3f3f46;"></div>
<div style="left:282px;top:396px;width:1px;height:9px;background:#3f3f46;"></div>
<svg style="left:225px;top:397px" width="7" height="8"><path d="M6 1 L2 3.5 L6 6" fill="none" stroke="#5a5a5e" stroke-width="1"/><path d="M3 6 H7" stroke="#5a5a5e" stroke-width="1"/></svg>
<svg style="left:242px;top:397.5px" width="7" height="8"><path d="M0 1 H3 M0 2.5 H2" stroke="#4a4a4e" stroke-width="0.9"/><rect x="2" y="4" width="4.5" height="3" fill="#4a4a4e"/></svg>
<svg style="left:254px;top:397.5px" width="7" height="8"><path d="M0 1 H3 M0 2.5 H2" stroke="#4a4a4e" stroke-width="0.9"/><rect x="2" y="4" width="4.5" height="3" fill="#4a4a4e"/></svg>
<svg style="left:270px;top:396px" width="7" height="9"><path d="M3.5 1 H6.5 M3.5 3 H6.5 M0 5.2 H6.5 M0 7 H6.5 M0 8.8 H6.5" stroke="#d8d8d8" stroke-width="0.8"/><path d="M0.3 0.2 L2.6 1.8 L0.3 3.4" fill="none" stroke="#e8443a" stroke-width="1"/></svg>
<svg style="left:287px;top:396.5px" width="8" height="8"><path d="M0.5 1 H3.5 V4 H0.5 Z" fill="none" stroke="#d0d0d0" stroke-width="0.8"/><path d="M4 3 H7 V6.5 H2.5 M3.5 5.5 L2.5 6.5 L3.5 7.5" fill="none" stroke="#d0d0d0" stroke-width="0.9"/></svg>
<div style="left:4px;top:407.5px;width:511px;height:47.5px;background:#252526;"></div>
<div style="left:515px;top:407.5px;width:4px;height:48px;background:#3a3a3e;"></div>
<div style="left:516.5px;top:411.5px;width:1px;height:1px;background:#6a6a6e;"></div>
<div style="left:516.5px;top:440px;width:1px;height:3px;background:#5a5a5e;"></div>
<div style="left:516.5px;top:449px;width:1px;height:1px;background:#6a6a6e;"></div>
<div id="t42" class="t" style="transform:scaleX(0.9557);left:10.6px;top:407.24px;font-size:6.1px;line-height:7.93px;color:#cfcfcf;font-weight:normal;font-family:'Liberation Mono', monospace;white-space:nowrap;">线程 0x4884 已退出，返回值为 2 (0x2)。</div>
<div id="t43" class="t" style="transform:scaleX(0.9557);left:10.6px;top:414.99px;font-size:6.1px;line-height:7.93px;color:#cfcfcf;font-weight:normal;font-family:'Liberation Mono', monospace;white-space:nowrap;">线程 0x1fdc 已退出，返回值为 2 (0x2)。</div>
<div id="t44" class="t" style="transform:scaleX(0.9557);left:10.6px;top:422.74px;font-size:6.1px;line-height:7.93px;color:#cfcfcf;font-weight:normal;font-family:'Liberation Mono', monospace;white-space:nowrap;">线程 0x3d40 已退出，返回值为 2 (0x2)。</div>
<div id="t45" class="t" style="transform:scaleX(0.9557);left:10.6px;top:430.49px;font-size:6.1px;line-height:7.93px;color:#cfcfcf;font-weight:normal;font-family:'Liberation Mono', monospace;white-space:nowrap;">线程 0x730 已退出，返回值为 2 (0x2)。</div>
<div id="t46" class="t" style="transform:scaleX(0.9155);left:10.6px;top:438.24px;font-size:6.1px;line-height:7.93px;color:#cfcfcf;font-weight:normal;font-family:'Liberation Mono', monospace;white-space:nowrap;">程序 “[12584] MFCApplication3.exe” 已退出，返回值为 2 (0x2)。</div>
<div style="left:4px;top:455px;width:515px;height:9.5px;background:#3e3e42;"></div>
<svg style="left:6.5px;top:457.5px" width="4" height="5"><path d="M3.5 0 L0 2.5 L3.5 5 Z" fill="#999"/></svg>
<div style="left:12.6px;top:456.7px;width:364.5px;height:5px;background:#686868;"></div>
<svg style="left:508.5px;top:457.5px" width="4" height="5"><path d="M0 0 L3.5 2.5 L0 5 Z" fill="#999"/></svg>
<div style="left:4px;top:464.2px;width:17.6px;height:9.8px;background:#252526;"></div>
<div id="t47" class="t" style="transform:scaleX(0.9286);left:6.5px;top:464.95px;font-size:7px;line-height:9.10px;color:#0097fb;font-weight:normal;font-family:'Liberation Sans', sans-serif;white-space:nowrap;">输出</div>
<div id="t48" class="t" style="transform:scaleX(0.9167);left:25px;top:465.15px;font-size:7px;line-height:9.10px;color:#d0d0d0;font-weight:normal;font-family:'Liberation Sans', sans-serif;white-space:nowrap;">查找符号结果</div>
<div style="left:0px;top:478px;width:690px;height:13px;background:#007acc;"></div>
<svg style="left:2px;top:481.5px" width="9" height="7"><path d="M2 0.5 H8.5 L7 6 H0.5 Z" fill="none" stroke="#ffffff" stroke-width="0.9"/></svg>
<div id="t49" class="t" style="transform:scaleX(0.9286);left:14.5px;top:479.95px;font-size:7px;line-height:9.10px;color:#ffffff;font-weight:normal;font-family:'Liberation Sans', sans-serif;white-space:nowrap;">就绪</div>
<svg style="left:604.5px;top:480.5px" width="5" height="7"><path d="M2.5 0 L5 3 H3.4 V7 H1.6 V3 H0 Z" fill="#ffffff"/></svg>
<div id="t50" class="t" style="transform:scaleX(0.9107);left:614px;top:479.65px;font-size:7px;line-height:9.10px;color:#ffffff;font-weight:normal;font-family:'Liberation Sans', sans-serif;white-space:nowrap;">添加到源代码管理</div>
<svg style="left:668.5px;top:482px" width="4" height="3"><path d="M0 3 L2 0 L4 3 Z" fill="#ffffff"/></svg>
<svg style="left:683px;top:483px" width="6" height="6"><g fill="#4c9ad6"><rect x="4" y="0" width="1" height="1"/><rect x="2" y="2" width="1" height="1"/><rect x="4" y="2" width="1" height="1"/><rect x="0" y="4" width="1" height="1"/><rect x="2" y="4" width="1" height="1"/><rect x="4" y="4" width="1" height="1"/></g></svg>
<div style="left:518.4px;top:57.7px;width:2.4px;height:420.3px;background:#1e1e1e;"></div>
<div style="left:520.5px;top:47px;width:155.5px;height:11.3px;background:#007acc;"></div>
<div id="t51" class="t" style="transform:scaleX(0.8571);left:523px;top:47.96px;font-size:7.3px;line-height:9.49px;color:#ffffff;font-weight:normal;font-family:'Liberation Sans', sans-serif;white-space:nowrap;">属性</div>
<svg style="left:538px;top:51px;opacity:0.6" width="107" height="4"><defs><pattern id="bp" width="4" height="4" patternUnits="userSpaceOnUse"><rect x="0" y="0" width="1" height="1" fill="#3c97d8"/><rect x="2" y="2" width="1" height="1" fill="#3c97d8"/></pattern></defs><rect width="107" height="4" fill="url(#bp)"/></svg>
<svg style="left:649.5px;top:51.8px" width="4" height="3"><path d="M0 0 H4 L2 2.6 Z" fill="#ffffff"/></svg>
<svg style="left:657.5px;top:50.5px" width="7" height="5"><path d="M0 2.5 H2 M2 0.5 V4.5 M2 1.2 H5.5 V3.8 H2" fill="none" stroke="#ffffff" stroke-width="0.9"/></svg>
<svg style="left:668px;top:50px" width="6" height="6"><path d="M0.3 0.3 L5.7 5.7 M5.7 0.3 L0.3 5.7" stroke="#ffffff" stroke-width="1.1"/></svg>
<div id="t52" class="t" style="transform:scaleX(0.8942);left:522.5px;top:59.19px;font-size:7.4px;line-height:9.62px;color:#f1f1f1;font-weight:bold;font-family:'Liberation Sans', sans-serif;white-space:nowrap;">IDC_BUTTON1 (Button Control)</div>
<div id="t53" class="t" style="transform:scaleX(0.9477);left:625px;top:59.19px;font-size:7.4px;line-height:9.62px;color:#b4b4b4;font-weight:normal;font-family:'Liberation Sans', sans-serif;white-space:nowrap;">IButtonEditor</div>
<svg style="left:671px;top:63px" width="3" height="2.2"><path d="M0 0 H3 L1.5 2 Z" fill="#e0e0e0"/></svg>
<div style="left:521.5px;top:70px;width:10.5px;height:10.5px;border:1px solid #2b5f92;"></div>
<svg style="left:523px;top:71.5px" width="8" height="8"><g fill="#b8b8b8"><rect x="0" y="0" width="3" height="1.6"/><rect x="4" y="0" width="3.5" height="1.6"/><rect x="0" y="2.4" width="3" height="1.2"/><rect x="4" y="2.4" width="3.5" height="1.2"/><rect x="0" y="4.6" width="3" height="1.2"/><rect x="4" y="4.6" width="3.5" height="1.2"/><rect x="0" y="6.6" width="3" height="1.2"/><rect x="4" y="6.6" width="3.5" height="1.2"/></g></svg>
<svg style="left:533px;top:71.5px" width="9" height="8"><g fill="#b0b0b0"><rect x="0" y="0" width="4.5" height="1.5"/><rect x="0" y="2.3" width="3" height="1.3"/><rect x="0" y="4.6" width="4" height="1.3"/><rect x="0" y="6.6" width="3" height="1.3"/></g><path d="M6.8 0.5 V7 M5.3 5.4 L6.8 7.2 L8.3 5.4" fill="none" stroke="#5aaeff" stroke-width="1.1"/></svg>
<div style="left:543px;top:70px;width:10.5px;height:10.5px;border:1px solid #2b5f92;"></div>
<svg style="left:545px;top:72px" width="7" height="7"><path d="M0.5 0.5 H4.8 L6.5 2.2 V6.5 H0.5 Z" fill="#8a8a8a"/><path d="M1.8 2.4 L3.2 4.6 L5 1.4" fill="none" stroke="#e8e8e8" stroke-width="1"/></svg>
<svg style="left:555.5px;top:71px" width="8" height="9"><path d="M5.5 0 L1 5 H3.6 L1.8 9 L7.2 3.6 H4.6 Z" fill="#c8dc44"/></svg>
<svg style="left:565px;top:71px" width="10" height="9"><circle cx="6.8" cy="2.9" r="2.5" fill="none" stroke="#8c8c8c" stroke-width="1.5"/><path d="M5 4.7 L1 8.4 M2.2 7.2 L3.4 8.3" stroke="#8c8c8c" stroke-width="1.6"/></svg>
<div style="left:520.5px;top:81.5px;width:155.5px;height:371.5px;background:#252526;"></div>
<div style="left:520.5px;top:81.5px;width:7.5px;height:274.5px;background:#2d2d30;"></div>
<div style="left:520.5px;top:82.9px;width:155.5px;height:9.103px;background:#2d2d30;"></div>
<svg style="left:522px;top:84.45px" width="6" height="6"><rect x="0.5" y="0.5" width="5" height="5" fill="none" stroke="#999" stroke-width="0.8"/><path d="M1 3 H5" stroke="#bbb" stroke-width="0.8"/></svg>
<div id="t54" class="t" style="left:529.5px;top:82.77px;font-size:7.2px;line-height:9.36px;color:#f1f1f1;font-weight:bold;font-family:'Liberation Sans', sans-serif;white-space:nowrap;">动态布局</div>
<div style="left:528px;top:100.506px;width:148px;height:0.6px;background:#2b2b2e;"></div>
<div style="left:594.5px;top:92.003px;width:0.6px;height:9.103px;background:#2b2b2e;"></div>
<div id="t55" class="t" style="left:529.5px;top:91.81px;font-size:7.3px;line-height:9.49px;color:#f1f1f1;font-weight:normal;font-family:'Liberation Sans', sans-serif;white-space:nowrap;width:71.7px;overflow:hidden;transform:scaleX(0.9);">调整大小类型</div>
<div id="t56" class="t" style="left:596px;top:91.81px;font-size:7.3px;line-height:9.49px;color:#f1f1f1;font-weight:normal;font-family:'Liberation Sans', sans-serif;white-space:nowrap;transform:scaleX(0.87);">无</div>
<div style="left:528px;top:109.60900000000001px;width:148px;height:0.6px;background:#2b2b2e;"></div>
<div style="left:594.5px;top:101.10600000000001px;width:0.6px;height:9.103px;background:#2b2b2e;"></div>
<div id="t57" class="t" style="left:529.5px;top:100.91px;font-size:7.3px;line-height:9.49px;color:#f1f1f1;font-weight:normal;font-family:'Liberation Sans', sans-serif;white-space:nowrap;width:71.7px;overflow:hidden;transform:scaleX(0.9);">移动类型</div>
<div id="t58" class="t" style="left:596px;top:100.91px;font-size:7.3px;line-height:9.49px;color:#f1f1f1;font-weight:normal;font-family:'Liberation Sans', sans-serif;white-space:nowrap;transform:scaleX(0.87);">无</div>
<div style="left:520.5px;top:110.209px;width:155.5px;height:9.103px;background:#2d2d30;"></div>
<svg style="left:522px;top:111.76px" width="6" height="6"><rect x="0.5" y="0.5" width="5" height="5" fill="none" stroke="#999" stroke-width="0.8"/><path d="M1 3 H5" stroke="#bbb" stroke-width="0.8"/></svg>
<div id="t59" class="t" style="left:529.5px;top:110.08px;font-size:7.2px;line-height:9.36px;color:#f1f1f1;font-weight:bold;font-family:'Liberation Sans', sans-serif;white-space:nowrap;">外观</div>
<div style="left:528px;top:127.81500000000003px;width:148px;height:0.6px;background:#2b2b2e;"></div>
<div style="left:594.5px;top:119.31200000000001px;width:0.6px;height:9.103px;background:#2b2b2e;"></div>
<div id="t60" class="t" style="left:529.5px;top:119.12px;font-size:7.3px;line-height:9.49px;color:#f1f1f1;font-weight:normal;font-family:'Liberation Sans', sans-serif;white-space:nowrap;width:71.7px;overflow:hidden;transform:scaleX(0.9);">Bitmap</div>
<div id="t61" class="t" style="left:596px;top:119.12px;font-size:7.3px;line-height:9.49px;color:#f1f1f1;font-weight:normal;font-family:'Liberation Sans', sans-serif;white-space:nowrap;transform:scaleX(0.87);">False</div>
<div style="left:528px;top:136.91800000000003px;width:148px;height:0.6px;background:#2b2b2e;"></div>
<div style="left:594.5px;top:128.41500000000002px;width:0.6px;height:9.103px;background:#2b2b2e;"></div>
<div style="left:528px;top:128.41500000000002px;width:66.5px;height:9.103px;background:#3399ff;"></div>
<div id="t62" class="t" style="left:529.5px;top:128.22px;font-size:7.3px;line-height:9.49px;color:#ffffff;font-weight:normal;font-family:'Liberation Sans', sans-serif;white-space:nowrap;width:71.7px;overflow:hidden;transform:scaleX(0.9);">Caption</div>
<div id="t63" class="t" style="left:596px;top:128.22px;font-size:7.3px;line-height:9.49px;color:#f1f1f1;font-weight:normal;font-family:'Liberation Sans', sans-serif;white-space:nowrap;transform:scaleX(0.87);">获取本地的TCP协议的统计数据</div>
<div style="left:528px;top:146.02100000000002px;width:148px;height:0.6px;background:#2b2b2e;"></div>
<div style="left:594.5px;top:137.518px;width:0.6px;height:9.103px;background:#2b2b2e;"></div>
<div id="t64" class="t" style="left:529.5px;top:137.32px;font-size:7.3px;line-height:9.49px;color:#f1f1f1;font-weight:normal;font-family:'Liberation Sans', sans-serif;white-space:nowrap;width:71.7px;overflow:hidden;transform:scaleX(0.9);">Client Edge</div>
<div id="t65" class="t" style="left:596px;top:137.32px;font-size:7.3px;line-height:9.49px;color:#f1f1f1;font-weight:normal;font-family:'Liberation Sans', sans-serif;white-space:nowrap;transform:scaleX(0.87);">False</div>
<div style="left:528px;top:155.12400000000002px;width:148px;height:0.6px;background:#2b2b2e;"></div>
<div style="left:594.5px;top:146.621px;width:0.6px;height:9.103px;background:#2b2b2e;"></div>
<div id="t66" class="t" style="left:529.5px;top:146.43px;font-size:7.3px;line-height:9.49px;color:#f1f1f1;font-weight:normal;font-family:'Liberation Sans', sans-serif;white-space:nowrap;width:71.7px;overflow:hidden;transform:scaleX(0.9);">Flat</div>
<div id="t67" class="t" style="left:596px;top:146.43px;font-size:7.3px;line-height:9.49px;color:#f1f1f1;font-weight:normal;font-family:'Liberation Sans', sans-serif;white-space:nowrap;transform:scaleX(0.87);">False</div>
<div style="left:528px;top:164.227px;width:148px;height:0.6px;background:#2b2b2e;"></div>
<div style="left:594.5px;top:155.724px;width:0.6px;height:9.103px;background:#2b2b2e;"></div>
<div id="t68" class="t" style="left:529.5px;top:155.53px;font-size:7.3px;line-height:9.49px;color:#f1f1f1;font-weight:normal;font-family:'Liberation Sans', sans-serif;white-space:nowrap;width:71.7px;overflow:hidden;transform:scaleX(0.9);">Horizontal Alignment</div>
<div id="t69" class="t" style="left:596px;top:155.53px;font-size:7.3px;line-height:9.49px;color:#f1f1f1;font-weight:normal;font-family:'Liberation Sans', sans-serif;white-space:nowrap;transform:scaleX(0.87);">默认值</div>
<div style="left:528px;top:173.33px;width:148px;height:0.6px;background:#2b2b2e;"></div>
<div style="left:594.5px;top:164.827px;width:0.6px;height:9.103px;background:#2b2b2e;"></div>
<div id="t70" class="t" style="left:529.5px;top:164.63px;font-size:7.3px;line-height:9.49px;color:#f1f1f1;font-weight:normal;font-family:'Liberation Sans', sans-serif;white-space:nowrap;width:71.7px;overflow:hidden;transform:scaleX(0.9);">Icon</div>
<div id="t71" class="t" style="left:596px;top:164.63px;font-size:7.3px;line-height:9.49px;color:#f1f1f1;font-weight:normal;font-family:'Liberation Sans', sans-serif;white-space:nowrap;transform:scaleX(0.87);">False</div>
<div style="left:528px;top:182.43300000000002px;width:148px;height:0.6px;background:#2b2b2e;"></div>
<div style="left:594.5px;top:173.93px;width:0.6px;height:9.103px;background:#2b2b2e;"></div>
<div id="t72" class="t" style="left:529.5px;top:173.74px;font-size:7.3px;line-height:9.49px;color:#f1f1f1;font-weight:normal;font-family:'Liberation Sans', sans-serif;white-space:nowrap;width:71.7px;overflow:hidden;transform:scaleX(0.9);">Modal Frame</div>
<div id="t73" class="t" style="left:596px;top:173.74px;font-size:7.3px;line-height:9.49px;color:#f1f1f1;font-weight:normal;font-family:'Liberation Sans', sans-serif;white-space:nowrap;transform:scaleX(0.87);">False</div>
<div style="left:528px;top:191.53600000000003px;width:148px;height:0.6px;background:#2b2b2e;"></div>
<div style="left:594.5px;top:183.03300000000002px;width:0.6px;height:9.103px;background:#2b2b2e;"></div>
<div id="t74" class="t" style="left:529.5px;top:182.84px;font-size:7.3px;line-height:9.49px;color:#f1f1f1;font-weight:normal;font-family:'Liberation Sans', sans-serif;white-space:nowrap;width:71.7px;overflow:hidden;transform:scaleX(0.9);">Multiline</div>
<div id="t75" class="t" style="left:596px;top:182.84px;font-size:7.3px;line-height:9.49px;color:#f1f1f1;font-weight:normal;font-family:'Liberation Sans', sans-serif;white-space:nowrap;transform:scaleX(0.87);">False</div>
<div style="left:528px;top:200.639px;width:148px;height:0.6px;background:#2b2b2e;"></div>
<div style="left:594.5px;top:192.136px;width:0.6px;height:9.103px;background:#2b2b2e;"></div>
<div id="t76" class="t" style="left:529.5px;top:191.94px;font-size:7.3px;line-height:9.49px;color:#f1f1f1;font-weight:normal;font-family:'Liberation Sans', sans-serif;white-space:nowrap;width:71.7px;overflow:hidden;transform:scaleX(0.9);">Notify</div>
<div id="t77" class="t" style="left:596px;top:191.94px;font-size:7.3px;line-height:9.49px;color:#f1f1f1;font-weight:normal;font-family:'Liberation Sans', sans-serif;white-space:nowrap;transform:scaleX(0.87);">False</div>
<div style="left:528px;top:209.74200000000002px;width:148px;height:0.6px;background:#2b2b2e;"></div>
<div style="left:594.5px;top:201.239px;width:0.6px;height:9.103px;background:#2b2b2e;"></div>
<div id="t78" class="t" style="left:529.5px;top:201.05px;font-size:7.3px;line-height:9.49px;color:#f1f1f1;font-weight:normal;font-family:'Liberation Sans', sans-serif;white-space:nowrap;width:71.7px;overflow:hidden;transform:scaleX(0.9);">Right Align Text</div>
<div id="t79" class="t" style="left:596px;top:201.05px;font-size:7.3px;line-height:9.49px;color:#f1f1f1;font-weight:normal;font-family:'Liberation Sans', sans-serif;white-space:nowrap;transform:scaleX(0.87);">False</div>
<div style="left:528px;top:218.845px;width:148px;height:0.6px;background:#2b2b2e;"></div>
<div style="left:594.5px;top:210.34199999999998px;width:0.6px;height:9.103px;background:#2b2b2e;"></div>
<div id="t80" class="t" style="left:529.5px;top:210.15px;font-size:7.3px;line-height:9.49px;color:#f1f1f1;font-weight:normal;font-family:'Liberation Sans', sans-serif;white-space:nowrap;width:71.7px;overflow:hidden;transform:scaleX(0.9);">Right To Left Reading</div>
<div id="t81" class="t" style="left:596px;top:210.15px;font-size:7.3px;line-height:9.49px;color:#f1f1f1;font-weight:normal;font-family:'Liberation Sans', sans-serif;white-space:nowrap;transform:scaleX(0.87);">False</div>
<div style="left:528px;top:227.948px;width:148px;height:0.6px;background:#2b2b2e;"></div>
<div style="left:594.5px;top:219.445px;width:0.6px;height:9.103px;background:#2b2b2e;"></div>
<div id="t82" class="t" style="left:529.5px;top:219.25px;font-size:7.3px;line-height:9.49px;color:#f1f1f1;font-weight:normal;font-family:'Liberation Sans', sans-serif;white-space:nowrap;width:71.7px;overflow:hidden;transform:scaleX(0.9);">Static Edge</div>
<div id="t83" class="t" style="left:596px;top:219.25px;font-size:7.3px;line-height:9.49px;color:#f1f1f1;font-weight:normal;font-family:'Liberation Sans', sans-serif;white-space:nowrap;transform:scaleX(0.87);">False</div>
<div style="left:528px;top:237.05100000000002px;width:148px;height:0.6px;background:#2b2b2e;"></div>
<div style="left:594.5px;top:228.548px;width:0.6px;height:9.103px;background:#2b2b2e;"></div>
<div id="t84" class="t" style="left:529.5px;top:228.35px;font-size:7.3px;line-height:9.49px;color:#f1f1f1;font-weight:normal;font-family:'Liberation Sans', sans-serif;white-space:nowrap;width:71.7px;overflow:hidden;transform:scaleX(0.9);">Transparent</div>
<div id="t85" class="t" style="left:596px;top:228.35px;font-size:7.3px;line-height:9.49px;color:#f1f1f1;font-weight:normal;font-family:'Liberation Sans', sans-serif;white-space:nowrap;transform:scaleX(0.87);">False</div>
<div style="left:528px;top:246.15400000000002px;width:148px;height:0.6px;background:#2b2b2e;"></div>
<div style="left:594.5px;top:237.651px;width:0.6px;height:9.103px;background:#2b2b2e;"></div>
<div id="t86" class="t" style="left:529.5px;top:237.46px;font-size:7.3px;line-height:9.49px;color:#f1f1f1;font-weight:normal;font-family:'Liberation Sans', sans-serif;white-space:nowrap;width:71.7px;overflow:hidden;transform:scaleX(0.9);">Vertical Alignment</div>
<div id="t87" class="t" style="left:596px;top:237.46px;font-size:7.3px;line-height:9.49px;color:#f1f1f1;font-weight:normal;font-family:'Liberation Sans', sans-serif;white-space:nowrap;transform:scaleX(0.87);">默认值</div>
<div style="left:520.5px;top:246.754px;width:155.5px;height:9.103px;background:#2d2d30;"></div>
<svg style="left:522px;top:248.31px" width="6" height="6"><rect x="0.5" y="0.5" width="5" height="5" fill="none" stroke="#999" stroke-width="0.8"/><path d="M1 3 H5" stroke="#bbb" stroke-width="0.8"/></svg>
<div id="t88" class="t" style="left:529.5px;top:246.63px;font-size:7.2px;line-height:9.36px;color:#f1f1f1;font-weight:bold;font-family:'Liberation Sans', sans-serif;white-space:nowrap;">行为</div>
<div style="left:528px;top:264.35999999999996px;width:148px;height:0.6px;background:#2b2b2e;"></div>
<div style="left:594.5px;top:255.857px;width:0.6px;height:9.103px;background:#2b2b2e;"></div>
<div id="t89" class="t" style="left:529.5px;top:255.66px;font-size:7.3px;line-height:9.49px;color:#f1f1f1;font-weight:normal;font-family:'Liberation Sans', sans-serif;white-space:nowrap;width:71.7px;overflow:hidden;transform:scaleX(0.9);">Acccept Files</div>
<div id="t90" class="t" style="left:596px;top:255.66px;font-size:7.3px;line-height:9.49px;color:#f1f1f1;font-weight:normal;font-family:'Liberation Sans', sans-serif;white-space:nowrap;transform:scaleX(0.87);">False</div>
<div style="left:528px;top:273.463px;width:148px;height:0.6px;background:#2b2b2e;"></div>
<div style="left:594.5px;top:264.96000000000004px;width:0.6px;height:9.103px;background:#2b2b2e;"></div>
<div id="t91" class="t" style="left:529.5px;top:264.77px;font-size:7.3px;line-height:9.49px;color:#f1f1f1;font-weight:normal;font-family:'Liberation Sans', sans-serif;white-space:nowrap;width:71.7px;overflow:hidden;transform:scaleX(0.9);">Default Button</div>
<div id="t92" class="t" style="left:596px;top:264.77px;font-size:7.3px;line-height:9.49px;color:#f1f1f1;font-weight:normal;font-family:'Liberation Sans', sans-serif;white-space:nowrap;transform:scaleX(0.87);">False</div>
<div style="left:528px;top:282.566px;width:148px;height:0.6px;background:#2b2b2e;"></div>
<div style="left:594.5px;top:274.063px;width:0.6px;height:9.103px;background:#2b2b2e;"></div>
<div id="t93" class="t" style="left:529.5px;top:273.87px;font-size:7.3px;line-height:9.49px;color:#f1f1f1;font-weight:normal;font-family:'Liberation Sans', sans-serif;white-space:nowrap;width:71.7px;overflow:hidden;transform:scaleX(0.9);">Disabled</div>
<div id="t94" class="t" style="left:596px;top:273.87px;font-size:7.3px;line-height:9.49px;color:#f1f1f1;font-weight:normal;font-family:'Liberation Sans', sans-serif;white-space:nowrap;transform:scaleX(0.87);">False</div>
<div style="left:528px;top:291.669px;width:148px;height:0.6px;background:#2b2b2e;"></div>
<div style="left:594.5px;top:283.166px;width:0.6px;height:9.103px;background:#2b2b2e;"></div>
<div id="t95" class="t" style="left:529.5px;top:282.97px;font-size:7.3px;line-height:9.49px;color:#f1f1f1;font-weight:normal;font-family:'Liberation Sans', sans-serif;white-space:nowrap;width:71.7px;overflow:hidden;transform:scaleX(0.9);">Help ID</div>
<div id="t96" class="t" style="left:596px;top:282.97px;font-size:7.3px;line-height:9.49px;color:#f1f1f1;font-weight:normal;font-family:'Liberation Sans', sans-serif;white-space:nowrap;transform:scaleX(0.87);">False</div>
<div style="left:528px;top:300.772px;width:148px;height:0.6px;background:#2b2b2e;"></div>
<div style="left:594.5px;top:292.269px;width:0.6px;height:9.103px;background:#2b2b2e;"></div>
<div id="t97" class="t" style="left:529.5px;top:292.08px;font-size:7.3px;line-height:9.49px;color:#f1f1f1;font-weight:normal;font-family:'Liberation Sans', sans-serif;white-space:nowrap;width:71.7px;overflow:hidden;transform:scaleX(0.9);">Owner Draw</div>
<div id="t98" class="t" style="left:596px;top:292.08px;font-size:7.3px;line-height:9.49px;color:#f1f1f1;font-weight:normal;font-family:'Liberation Sans', sans-serif;white-space:nowrap;transform:scaleX(0.87);">False</div>
<div style="left:528px;top:309.87499999999994px;width:148px;height:0.6px;background:#2b2b2e;"></div>
<div style="left:594.5px;top:301.37199999999996px;width:0.6px;height:9.103px;background:#2b2b2e;"></div>
<div id="t99" class="t" style="left:529.5px;top:301.18px;font-size:7.3px;line-height:9.49px;color:#f1f1f1;font-weight:normal;font-family:'Liberation Sans', sans-serif;white-space:nowrap;width:71.7px;overflow:hidden;transform:scaleX(0.9);">Visible</div>
<div id="t100" class="t" style="left:596px;top:301.18px;font-size:7.3px;line-height:9.49px;color:#f1f1f1;font-weight:normal;font-family:'Liberation Sans', sans-serif;white-space:nowrap;transform:scaleX(0.87);">True</div>
<div style="left:520.5px;top:310.475px;width:155.5px;height:9.103px;background:#2d2d30;"></div>
<svg style="left:522px;top:312.03px" width="6" height="6"><rect x="0.5" y="0.5" width="5" height="5" fill="none" stroke="#999" stroke-width="0.8"/><path d="M1 3 H5" stroke="#bbb" stroke-width="0.8"/></svg>
<div id="t101" class="t" style="left:529.5px;top:310.35px;font-size:7.2px;line-height:9.36px;color:#f1f1f1;font-weight:bold;font-family:'Liberation Sans', sans-serif;white-space:nowrap;">杂项</div>
<div style="left:528px;top:328.08099999999996px;width:148px;height:0.6px;background:#2b2b2e;"></div>
<div style="left:594.5px;top:319.578px;width:0.6px;height:9.103px;background:#2b2b2e;"></div>
<div id="t102" class="t" style="left:529.5px;top:319.38px;font-size:7.3px;line-height:9.49px;color:#808080;font-weight:normal;font-family:'Liberation Sans', sans-serif;white-space:nowrap;width:71.7px;overflow:hidden;transform:scaleX(0.9);">(Name)</div>
<div id="t103" class="t" style="left:596px;top:319.38px;font-size:7.3px;line-height:9.49px;color:#808080;font-weight:normal;font-family:'Liberation Sans', sans-serif;white-space:nowrap;transform:scaleX(0.87);">IDC_BUTTON1 (Button Control)</div>
<div style="left:528px;top:337.184px;width:148px;height:0.6px;background:#2b2b2e;"></div>
<div style="left:594.5px;top:328.68100000000004px;width:0.6px;height:9.103px;background:#2b2b2e;"></div>
<div id="t104" class="t" style="left:529.5px;top:328.49px;font-size:7.3px;line-height:9.49px;color:#f1f1f1;font-weight:normal;font-family:'Liberation Sans', sans-serif;white-space:nowrap;width:71.7px;overflow:hidden;transform:scaleX(0.9);">Group</div>
<div id="t105" class="t" style="left:596px;top:328.49px;font-size:7.3px;line-height:9.49px;color:#f1f1f1;font-weight:normal;font-family:'Liberation Sans', sans-serif;white-space:nowrap;transform:scaleX(0.87);">False</div>
<div style="left:528px;top:346.287px;width:148px;height:0.6px;background:#2b2b2e;"></div>
<div style="left:594.5px;top:337.784px;width:0.6px;height:9.103px;background:#2b2b2e;"></div>
<div id="t106" class="t" style="left:529.5px;top:337.59px;font-size:7.3px;line-height:9.49px;color:#f1f1f1;font-weight:normal;font-family:'Liberation Sans', sans-serif;white-space:nowrap;width:71.7px;overflow:hidden;transform:scaleX(0.9);">ID</div>
<div id="t107" class="t" style="left:596px;top:337.59px;font-size:7.3px;line-height:9.49px;color:#f1f1f1;font-weight:normal;font-family:'Liberation Sans', sans-serif;white-space:nowrap;transform:scaleX(0.87);">IDC_BUTTON1</div>
<div style="left:528px;top:355.38999999999993px;width:148px;height:0.6px;background:#2b2b2e;"></div>
<div style="left:594.5px;top:346.88699999999994px;width:0.6px;height:9.103px;background:#2b2b2e;"></div>
<div id="t108" class="t" style="left:529.5px;top:346.69px;font-size:7.3px;line-height:9.49px;color:#f1f1f1;font-weight:normal;font-family:'Liberation Sans', sans-serif;white-space:nowrap;width:71.7px;overflow:hidden;transform:scaleX(0.9);">Tabstop</div>
<div id="t109" class="t" style="left:596px;top:346.69px;font-size:7.3px;line-height:9.49px;color:#f1f1f1;font-weight:normal;font-family:'Liberation Sans', sans-serif;white-space:nowrap;transform:scaleX(0.87);">True</div>
<div style="left:520.5px;top:452.3px;width:156.5px;height:22.2px;background:#252526;border-top:1px solid #36363a;border-bottom:1px solid #3a3a3e;border-right:1px solid #3a3a3e;"></div>
<div id="t110" class="t" style="transform:scaleX(0.8833);left:524px;top:454.86px;font-size:7.3px;line-height:9.49px;color:#e8e8e8;font-weight:bold;font-family:'Liberation Sans', sans-serif;white-space:nowrap;">Caption</div>
<div id="t111" class="t" style="transform:scaleX(0.8571);left:524px;top:463.75px;font-size:7px;line-height:9.10px;color:#e0e0e0;font-weight:normal;font-family:'Liberation Sans', sans-serif;white-space:nowrap;">指定由控件显示的文本。</div>
<div style="left:676px;top:44px;width:14px;height:433.5px;background:#2d2d30;"></div>
<div style="left:676px;top:58px;width:1px;height:419.5px;background:#333337;"></div>
<div style="left:686.8px;top:46.7px;width:3.2px;height:125.5px;background:#333337;"></div>
<div style="left:684.1px;top:46px;width:49px;height:6.5px;font-size:6.1px;line-height:6.5px;color:#c0c0c0;white-space:nowrap;font-family:'Liberation Sans', sans-serif;transform-origin:0 0;transform:rotate(90deg);text-align:center;">服务器资源管理器</div>
<div style="left:684.1px;top:102px;width:20px;height:6.5px;font-size:6.1px;line-height:6.5px;color:#c0c0c0;white-space:nowrap;font-family:'Liberation Sans', sans-serif;transform-origin:0 0;transform:rotate(90deg);text-align:center;">工具箱</div>
<div style="left:684.1px;top:128px;width:12.6px;height:6.5px;font-size:6.1px;line-height:6.5px;color:#c0c0c0;white-space:nowrap;font-family:'Liberation Sans', sans-serif;transform-origin:0 0;transform:rotate(90deg);text-align:center;">属性</div>
<div style="left:684.1px;top:148px;width:23.5px;height:6.5px;font-size:6.1px;line-height:6.5px;color:#c0c0c0;white-space:nowrap;font-family:'Liberation Sans', sans-serif;transform-origin:0 0;transform:rotate(90deg);text-align:center;">诊断工具</div>
<div style="left:0px;top:440px;width:519px;height:37.5px;overflow:hidden;"><div style="left:61px;top:2px;font-size:38px;line-height:40px;font-weight:bold;color:rgba(255,255,255,0.08);font-family:'Liberation Sans',sans-serif;letter-spacing:-0.8px;">REEBUF</div></div>
<div style="left:18px;top:442px;width:11px;height:35.5px;background:rgba(70,160,110,0.2);"></div>
<div style="left:37px;top:449.5px;width:23px;height:28px;background:rgba(70,160,110,0.2);"></div>
</body></html>
